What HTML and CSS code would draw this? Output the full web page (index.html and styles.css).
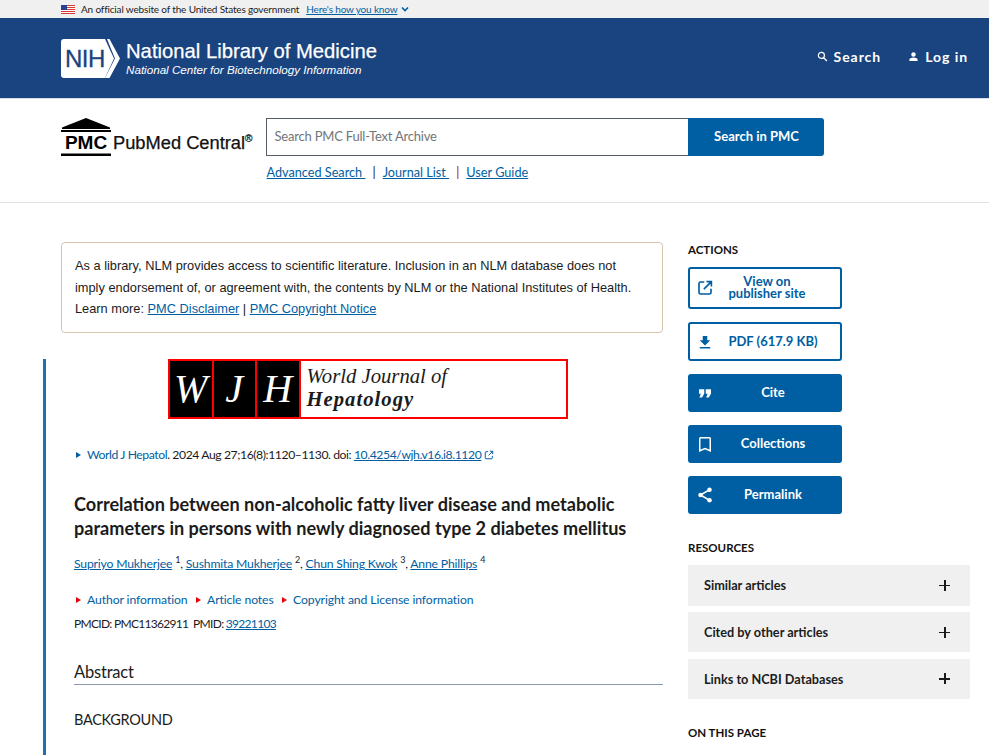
FILE: index.html
```html
<!DOCTYPE html>
<html lang="en">
<head>
    <meta charset="UTF-8">
    <meta name="viewport" content="width=device-width, initial-scale=1.0">
    <title>Correlation between non-alcoholic fatty liver disease and metabolic parameters - PMC</title>
    <link rel="stylesheet" href="styles.css">
</head>
<body>
    <div class="gov-banner">
        <svg class="flag" viewBox="0 0 14 9" xmlns="http://www.w3.org/2000/svg">
            <rect width="14" height="9" fill="#fff"/>
            <path d="M0 0.5h14M0 2.5h14M0 4.5h14M0 6.5h14M0 8.5h14" stroke="#d83933" stroke-width="1"/>
            <rect width="6" height="5" fill="#2a3f8f"/>
        </svg>
        <span>An official website of the United States government</span>
        <a href="#" class="gov-link">Here's how you know</a>
        <svg class="gov-chevron" viewBox="0 0 10 10" xmlns="http://www.w3.org/2000/svg"><path d="M2 3.500l3 3 3-3" fill="none" stroke="#005ea2" stroke-width="1.600"/></svg>
    </div>

    <header class="nih-header">
        <div class="nih-brand">
            <svg class="nih-logo" viewBox="0 0 60 39" xmlns="http://www.w3.org/2000/svg">
                <path d="M3 0h41l9 19.500-9 19.500H3a3 3 0 0 1-3-3V3a3 3 0 0 1 3-3z" fill="#fff"/>
                <path d="M46 0h2.500L59 19.500 48.500 39H44l10-19.500z" fill="#fff"/>
                <text x="4" y="28" class="nih-logo-text">NIH</text>
            </svg>
            <div class="nih-names">
                <div class="nih-title">National Library of Medicine</div>
                <div class="nih-sub">National Center for Biotechnology Information</div>
            </div>
        </div>
        <nav class="nih-nav">
            <a href="#" class="nih-nav-link">
                <svg viewBox="0 0 12 12" xmlns="http://www.w3.org/2000/svg"><circle cx="4.800" cy="4.800" r="3.300" fill="none" stroke="#fff" stroke-width="1.300"/><path d="M7.300 7.300l3.500 3.500" stroke="#fff" stroke-width="1.500"/></svg>
                Search
            </a>
            <a href="#" class="nih-nav-link">
                <svg viewBox="0 0 12 12" xmlns="http://www.w3.org/2000/svg"><circle cx="6" cy="3.800" r="2.400" fill="#fff"/><path d="M1.500 11V9.500C1.500 8 4 7.200 6 7.200s4.500.8 4.500 2.300V11z" fill="#fff"/></svg>
                Log in
            </a>
        </nav>
    </header>

    <section class="pmc-search">
        <div class="pmc-brand">
            <svg class="pmc-logo" viewBox="0 0 50 38" xmlns="http://www.w3.org/2000/svg">
                <path d="M25 0L49 9.500V11H1V9.500z" fill="#000"/>
                <rect y="12" width="50" height="2" fill="#000"/>
                <text x="25" y="31" class="pmc-logo-text">PMC</text>
                <rect y="35.500" width="50" height="2.500" fill="#000"/>
            </svg>
            <span class="pmc-name">PubMed Central<sup>®</sup></span>
        </div>
        <div class="pmc-search-col">
            <form class="search-form">
                <input class="search-input" type="text" placeholder="Search PMC Full-Text Archive">
                <button type="submit" class="search-btn">Search in PMC</button>
            </form>
            <div class="search-links">
                <a href="#">Advanced Search&nbsp;</a>
                <span class="sep">|</span>
                <a href="#">Journal List&nbsp;</a>
                <span class="sep sep-red">|</span>
                <a href="#">User Guide</a>
            </div>
        </div>
    </section>

    <div class="page">
        <main class="main-col">
            <div class="notice">
                As a library, NLM provides access to scientific literature. Inclusion in an NLM database does not imply endorsement of, or agreement with, the contents by NLM or the National Institutes of Health.<br>
                Learn more: <a href="#">PMC Disclaimer</a> | <a href="#">PMC Copyright Notice</a>
            </div>

            <article class="article">
                <div class="journal-logo">
                    <span class="jl-letter">W</span>
                    <span class="jl-letter">J</span>
                    <span class="jl-letter">H</span>
                    <div class="jl-name">World Journal of<br><b>Hepatology</b></div>
                </div>

                <p class="citation">
                    <span class="tri tri-blue"></span><a href="#" class="plain-link">World J Hepatol</a>. 2024 Aug 27;16(8):1120–1130. doi: <a href="#">10.4254/wjh.v16.i8.1120</a>
                    <svg class="ext-icon" viewBox="0 0 12 12" xmlns="http://www.w3.org/2000/svg"><path d="M5 2H2.500A1 1 0 0 0 1.500 3v6.500a1 1 0 0 0 1 1H9a1 1 0 0 0 1-1V7M7 1.500h3.500V5M10.500 1.500L5.500 6.500" fill="none" stroke="#005ea2" stroke-width="1.200"/></svg>
                </p>

                <h1 class="title">Correlation between non-alcoholic fatty liver disease and metabolic parameters in persons with newly diagnosed type 2 diabetes mellitus</h1>

                <p class="authors">
                    <a href="#">Supriyo Mukherjee</a> <sup>1</sup>, <a href="#">Sushmita Mukherjee</a> <sup>2</sup>, <a href="#">Chun Shing Kwok</a> <sup>3</sup>, <a href="#">Anne Phillips</a> <sup>4</sup>
                </p>

                <div class="article-meta">
                    <a href="#" class="plain-link"><span class="tri tri-red"></span>Author information</a>
                    <a href="#" class="plain-link"><span class="tri tri-red"></span>Article notes</a>
                    <a href="#" class="plain-link"><span class="tri tri-red"></span>Copyright and License information</a>
                </div>
                <p class="ids">PMCID: PMC11362911&nbsp; PMID: <a href="#">39221103</a></p>

                <h2 class="abstract-title">Abstract</h2>
                <h3 class="abstract-sub">BACKGROUND</h3>
            </article>
        </main>

        <aside class="side-col">
            <h4 class="side-head">ACTIONS</h4>
            <div class="actions">
                <a href="#" class="action action-outline action-tall">
                    <svg viewBox="0 0 24 24" xmlns="http://www.w3.org/2000/svg"><path d="M11 4H6a2 2 0 0 0-2 2v12a2 2 0 0 0 2 2h12a2 2 0 0 0 2-2v-5M14 3.500h6.500V10M20.500 3.500L10.500 13.500" fill="none" stroke="currentColor" stroke-width="2.200"/></svg>
                    <span>View on<br>publisher site</span>
                </a>
                <a href="#" class="action action-outline">
                    <svg viewBox="0 0 24 24" xmlns="http://www.w3.org/2000/svg"><path d="M19 9.500h-4V4H9v5.500H5l7 7zM5 18.500V20.500h14v-2z" fill="currentColor"/></svg>
                    <span>PDF (617.9 KB)</span>
                </a>
                <a href="#" class="action">
                    <svg viewBox="0 0 24 24" xmlns="http://www.w3.org/2000/svg"><path d="M4 7h7v6l-3 5H4.500l2-5H4zM13 7h7v6l-3 5h-3.500l2-5H13z" fill="currentColor"/></svg>
                    <span>Cite</span>
                </a>
                <a href="#" class="action">
                    <svg viewBox="0 0 24 24" xmlns="http://www.w3.org/2000/svg"><path d="M6 3.500h12a1 1 0 0 1 1 1V21l-7-3-7 3V4.500a1 1 0 0 1 1-1z" fill="none" stroke="currentColor" stroke-width="2"/></svg>
                    <span>Collections</span>
                </a>
                <a href="#" class="action">
                    <svg viewBox="0 0 24 24" xmlns="http://www.w3.org/2000/svg"><path d="M18 5L6 12l12 7" fill="none" stroke="currentColor" stroke-width="2"/><circle cx="18" cy="5" r="3" fill="currentColor"/><circle cx="6" cy="12" r="3" fill="currentColor"/><circle cx="18" cy="19" r="3" fill="currentColor"/></svg>
                    <span>Permalink</span>
                </a>
            </div>

            <h4 class="side-head side-head-res">RESOURCES</h4>
            <div class="accordion">
                <div class="acc-item">Similar articles <span class="acc-plus"></span></div>
                <div class="acc-item">Cited by other articles <span class="acc-plus"></span></div>
                <div class="acc-item">Links to NCBI Databases <span class="acc-plus"></span></div>
            </div>

            <h4 class="side-head side-head-page">ON THIS PAGE</h4>
        </aside>
    </div>
</body>
</html>
```

FILE: styles.css
```css
:root {
    --blue: #005ea2;
    --navy: #1a4480;
    --text: #1b1b1b;
    --sans: 'Lato', 'Noto Sans', sans-serif;
}
body {
    margin: 0;
    font-family: var(--sans);
    font-size: 12.200px;
    color: var(--text);
    background: #fff;
    height: 755px;
    overflow: hidden;
}
a { color: var(--blue); }
p { margin: 0; }

/* gov banner */
.gov-banner {
    height: 18px;
    background: #f0f0f0;
    display: flex;
    align-items: center;
    padding-left: 61px;
    font-size: 10px;
    letter-spacing: -0.16px;
}
.flag { width: 14px; height: 9px; margin-right: 6px; }
.gov-link { margin-left: 7px; }
.gov-chevron { width: 10px; height: 10px; margin-left: 3px; }

/* nih header */
.nih-header {
    height: 81px;
    box-sizing: border-box;
    background: var(--navy);
    border-bottom: 1px solid #d9dde3;
    display: flex;
    align-items: center;
    justify-content: space-between;
    padding: 0 21px 0 61px;
}
.nih-brand { display: flex; align-items: center; gap: 5px; }
.nih-logo { width: 60px; height: 39px; }
.nih-logo-text { font: 24px 'Liberation Sans', sans-serif; fill: var(--navy); stroke: var(--navy); stroke-width: 0.3px; letter-spacing: -0.5px; }
.nih-names { color: #fff; font-family: 'Liberation Sans', sans-serif; }
.nih-title { font-size: 20.250px; line-height: 23px; -webkit-text-stroke: 0.25px #fff; }
.nih-sub { font-size: 11.650px; font-style: italic; line-height: 13px; }
.nih-nav { display: flex; gap: 27px; margin-bottom: 3px; }
.nih-nav-link {
    color: #fff;
    text-decoration: none;
    font-weight: 700;
    font-size: 14px;
    letter-spacing: 0.95px;
    display: flex;
    align-items: center;
    gap: 6px;
}
.nih-nav-link svg { width: 11px; height: 11px; }

/* pmc search */
.pmc-search {
    height: 104px;
    box-sizing: border-box;
    border-bottom: 1px solid #dfe1e2;
    padding: 19px 0 0 61px;
    display: flex;
    gap: 14px;
}
.pmc-brand { display: flex; align-items: flex-end; gap: 2px; height: 38px; }
.pmc-logo { width: 50px; height: 38px; }
.pmc-logo-text { font: 700 19px 'Liberation Sans', sans-serif; text-anchor: middle; fill: #000; }
.pmc-name { font: 18.300px/22px 'Liberation Sans', sans-serif; color: #111; margin-bottom: 2px; -webkit-text-stroke: 0.25px #111; }
.pmc-name sup { font-size: 10px; line-height: 0; }
.search-form { display: flex; width: 558px; height: 38px; }
.search-input {
    flex: 1;
    box-sizing: border-box;
    border: 1px solid #565c65;
    border-right: 0;
    padding: 0 7px 2px;
    font: 13px var(--sans);
    letter-spacing: -0.2px;
    outline: 0;
}
.search-input::placeholder { color: #71767a; opacity: 1; }
.search-btn {
    width: 136px;
    border: 0;
    background: var(--blue);
    color: #fff;
    font: 700 13px var(--sans);
    border-radius: 0 3px 3px 0;
    padding: 0 0 2px;
}
.search-links { margin-top: 7px; font-size: 12.700px; display: flex; gap: 7px; line-height: 18px; }
.sep-red { color: #b50909; }

/* two columns */
.page {
    display: grid;
    grid-template-columns: 602px 282px;
    gap: 25px;
    padding: 39px 0 0 61px;
}
.notice {
    box-sizing: border-box;
    height: 91px;
    border: 1px solid #d9c3ad;
    border-radius: 4px;
    padding: 12px 13px;
    font: 12.800px/21.500px 'Liberation Sans', sans-serif;
}
.article {
    margin: 26px 0 0 -18px;
    padding: 0 0 60px 28px;
    border-left: 3px solid #1f70b3;
}
.journal-logo {
    box-sizing: border-box;
    width: 400px;
    height: 60px;
    margin-left: 94px;
    border: 2px solid #f00;
    display: flex;
    font-family: 'Liberation Serif', serif;
}
.jl-letter {
    box-sizing: border-box;
    width: 43.500px;
    background: #000;
    color: #fff;
    border-right: 2px solid #f00;
    font-size: 40px;
    font-style: italic;
    line-height: 56px;
    text-align: center;
}
.jl-name {
    padding: 4px 0 0 6px;
    font-size: 20.700px;
    font-style: italic;
    line-height: 23px;
}
.jl-name b { letter-spacing: 1px; }
.citation { margin-top: 27px; line-height: 18px; letter-spacing: -0.42px; }
.plain-link { text-decoration: none; }
.tri {
    display: inline-block;
    border-left: 5px solid;
    border-top: 3px solid transparent;
    border-bottom: 3px solid transparent;
    margin: 0 6px 1px 2px;
}
.tri-blue { border-left-color: var(--blue); }
.tri-red { border-left-color: #e5000b; }
.ext-icon { width: 10px; height: 10px; vertical-align: -1px; }
.title {
    margin: 28px 0 0;
    font-size: 18.100px;
    line-height: 24px;
    font-weight: 700;
    color: #1b1b1b;
}
.authors { margin-top: 15px; line-height: 18px; letter-spacing: -0.18px; }
.authors sup { font-size: 9px; line-height: 0; }
.article-meta { margin-top: 18px; display: flex; gap: 6.500px; line-height: 18px; letter-spacing: -0.1px; }
.ids { margin-top: 6px; line-height: 18px; font-size: 12px; letter-spacing: -0.7px; }
.abstract-title {
    margin: 27px 0 0;
    font-size: 16.500px;
    letter-spacing: -0.2px;
    font-weight: 400;
    line-height: 24px;
    border-bottom: 1px solid #8a9bb0;
}
.abstract-sub { margin: 24px 0 0; font-size: 14.500px; letter-spacing: -0.3px; font-weight: 400; line-height: 22px; }

/* sidebar */
.side-head { margin: 0; font-size: 11.500px; font-weight: 700; line-height: 16px; color: #111; }
.actions { display: flex; flex-direction: column; gap: 13px; width: 154px; margin-top: 9px; }
.action {
    box-sizing: border-box;
    height: 38px;
    display: flex;
    align-items: center;
    background: var(--blue);
    border: 2px solid var(--blue);
    border-radius: 3px;
    color: #fff;
    font-weight: 700;
    font-size: 13px;
    line-height: 12px;
    text-decoration: none;
    padding-left: 6px;
}
.action svg { width: 18px; height: 18px; flex: none; }
.action span { flex: 1; text-align: center; padding: 0 8px 2px 0; }
.action-outline { background: #fff; color: var(--blue); height: 39px; }
.action-tall { height: 42px; }
.action-tall span { padding-right: 20px; }
.side-head-res { margin-top: 26px; }
.accordion { margin-top: 9px; display: flex; flex-direction: column; gap: 6.250px; }
.acc-item {
    height: 40.500px;
    background: #f0f0f0;
    display: flex;
    align-items: center;
    justify-content: space-between;
    padding: 0 20px 0 16px;
    font-weight: 700;
    font-size: 12.700px;
}
.acc-plus { position: relative; width: 11px; height: 11px; }
.acc-plus::before, .acc-plus::after { content: ""; position: absolute; background: #1b1b1b; }
.acc-plus::before { left: 0; right: 0; top: 5px; height: 1.500px; }
.acc-plus::after { top: 0; bottom: 0; left: 5px; width: 1.500px; }
.side-head-page { margin-top: 26px; }
```
